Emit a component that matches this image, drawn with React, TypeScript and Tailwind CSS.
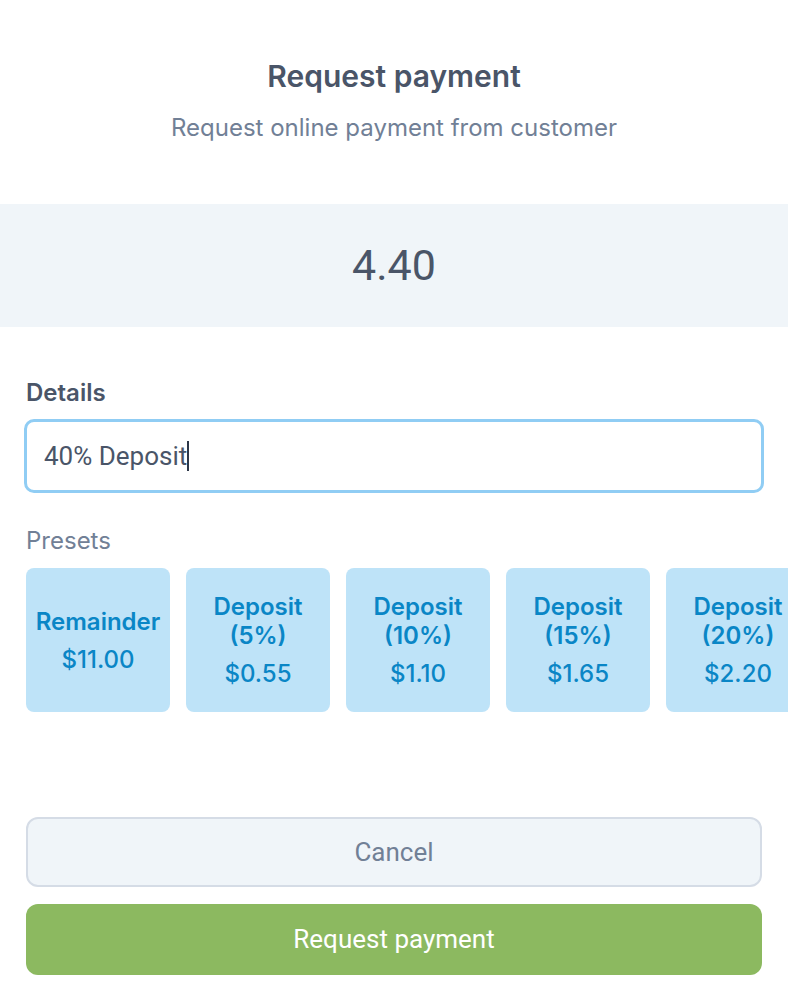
import React from 'react'

const presets = [
  { label: 'Remainder', amount: '$11.00' },
  { label: 'Deposit (5%)', amount: '$0.55' },
  { label: 'Deposit (10%)', amount: '$1.10' },
  { label: 'Deposit (15%)', amount: '$1.65' },
  { label: 'Deposit (20%)', amount: '$2.20' },
]

function PresetCard({ label, amount }: { label: string; amount: string }) {
  return (
    <button className="w-[144px] h-[144px] shrink-0 rounded-[8px] bg-[#bee3f8] flex flex-col items-center justify-center px-1 text-[#0a86c6] text-center">
      <span className="text-[24px] leading-[29px] font-semibold">{label}</span>
      <span className="text-[24px] leading-[29px] font-medium mt-[9px]">{amount}</span>
    </button>
  )
}

export default function App() {
  return (
    <div className="w-[788px] h-[994px] bg-white overflow-hidden" style={{ fontFamily: 'Inter, "Noto Sans", sans-serif' }}>
      <div className="pt-[58px] text-center">
        <h1 className="text-[30px] leading-[36px] font-semibold text-[#4a5568]">Request payment</h1>
        <p className="mt-[18px] text-[24px] leading-[32px] text-[#718096]">Request online payment from customer</p>
      </div>

      <div className="mt-[60px] h-[123px] bg-[#f0f5f9] flex items-center justify-center">
        <span className="text-[43px] text-[#4a5568]" style={{ fontFamily: 'Roboto, sans-serif' }}>4.40</span>
      </div>

      <div className="px-[26px]">
        <label className="block mt-[50px] text-[24px] leading-[32px] font-semibold text-[#4a5568]">Details</label>
        <div className="mt-[10px] mx-[-2px] h-[74px] rounded-[10px] border-[3px] border-[#90cdf4] bg-white flex items-center px-[17px]">
          <span className="text-[26px] text-[#4a5568]" style={{ fontFamily: 'Roboto, sans-serif' }}>40% Deposit</span>
          <span className="w-[1.5px] h-[30px] bg-[#2d3748]" />
        </div>

        <p className="mt-[32px] text-[24px] leading-[32px] text-[#718096]">Presets</p>
        <div className="mt-[11px] mr-[-26px] flex gap-4 overflow-hidden">
          {presets.map((p) => (
            <PresetCard key={p.label} label={p.label} amount={p.amount} />
          ))}
        </div>

        <div className="mt-[105px] flex flex-col gap-[17px]" style={{ fontFamily: 'Roboto, sans-serif' }}>
          <button className="h-[70px] w-full rounded-[12px] border-2 border-[#d5dce6] bg-[#f0f5f9] text-[26px] text-[#718096]">
            Cancel
          </button>
          <button className="h-[71px] w-full rounded-[12px] bg-[#8cb960] text-[26px] text-white">
            Request payment
          </button>
        </div>
      </div>
    </div>
  )
}
